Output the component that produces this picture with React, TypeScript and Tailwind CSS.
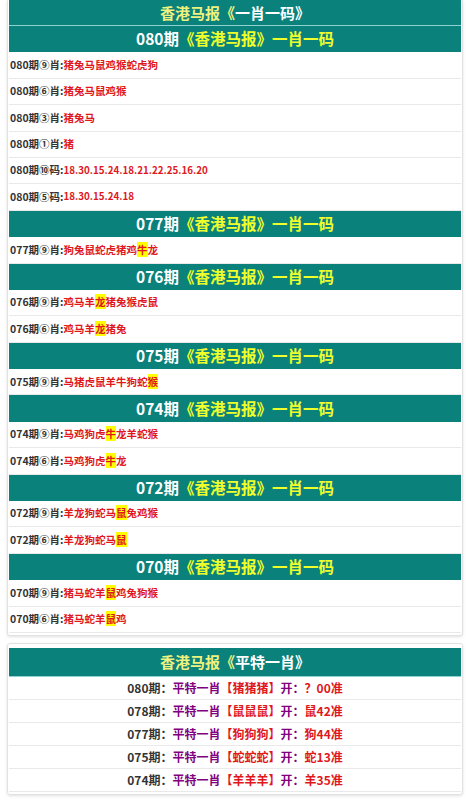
import React from "react";

type Row = { label: string; items: string; hl?: string; code?: boolean };
type Group = { issue: string; rows: Row[] };

const groups: Group[] = [
  {
    issue: "080",
    rows: [
      { label: "080期⑨肖:", items: "猪兔马鼠鸡猴蛇虎狗" },
      { label: "080期⑥肖:", items: "猪兔马鼠鸡猴" },
      { label: "080期③肖:", items: "猪兔马" },
      { label: "080期①肖:", items: "猪" },
      { label: "080期⑩码:", items: "18.30.15.24.18.21.22.25.16.20", code: true },
      { label: "080期⑤码:", items: "18.30.15.24.18", code: true },
    ],
  },
  { issue: "077", rows: [{ label: "077期⑨肖:", items: "狗兔鼠蛇虎猪鸡牛龙", hl: "牛" }] },
  {
    issue: "076",
    rows: [
      { label: "076期⑨肖:", items: "鸡马羊龙猪兔猴虎鼠", hl: "龙" },
      { label: "076期⑥肖:", items: "鸡马羊龙猪兔", hl: "龙" },
    ],
  },
  { issue: "075", rows: [{ label: "075期⑨肖:", items: "马猪虎鼠羊牛狗蛇猴", hl: "猴" }] },
  {
    issue: "074",
    rows: [
      { label: "074期⑨肖:", items: "马鸡狗虎牛龙羊蛇猴", hl: "牛" },
      { label: "074期⑥肖:", items: "马鸡狗虎牛龙", hl: "牛" },
    ],
  },
  {
    issue: "072",
    rows: [
      { label: "072期⑨肖:", items: "羊龙狗蛇马鼠兔鸡猴", hl: "鼠" },
      { label: "072期⑥肖:", items: "羊龙狗蛇马鼠", hl: "鼠" },
    ],
  },
  {
    issue: "070",
    rows: [
      { label: "070期⑨肖:", items: "猪马蛇羊鼠鸡兔狗猴", hl: "鼠" },
      { label: "070期⑥肖:", items: "猪马蛇羊鼠鸡", hl: "鼠" },
    ],
  },
];

const pt = [
  { issue: "080", z: "猪猪猪", open: "？00准" },
  { issue: "078", z: "鼠鼠鼠", open: "鼠42准" },
  { issue: "077", z: "狗狗狗", open: "狗44准" },
  { issue: "075", z: "蛇蛇蛇", open: "蛇13准" },
  { issue: "074", z: "羊羊羊", open: "羊35准" },
];

const font = { fontFamily: '"Noto Sans CJK SC", "Noto Sans", sans-serif' };

function Items({ items, hl, code }: { items: string; hl?: string; code?: boolean }) {
  const chars = Array.from(items);
  return (
    <span className={code ? "text-[#e0181c] text-[9.8px]" : "text-[#e0181c]"}>
      {chars.map((c, i) =>
        hl && c === hl ? (
          <span key={i} className="bg-[#ffff00]">
            {c}
          </span>
        ) : (
          <span key={i}>{c}</span>
        )
      )}
    </span>
  );
}

export default function App() {
  return (
    <div className="bg-white w-[466px] min-h-[800px] font-bold" style={font}>
      <div className="ml-[7px] mr-[3px] border border-t-0 border-[#e2e2e2] px-[1px] pb-[2px] shadow-[0_1px_3px_rgba(0,0,0,0.12)] rounded-b-[3px]">
        <div className="h-[25px] bg-[#0a817b] flex items-center justify-center text-[15px] leading-none">
          <span className="text-[#eef27e]">香港马报《</span>
          <span className="text-white">一肖一码》</span>
        </div>
        <div className="h-[1px] bg-[#8fd3d0]" />
        {groups.map((g) => (
          <div key={g.issue}>
            <div className="h-[26.4px] bg-[#0a817b] flex items-center justify-center text-[15.5px] leading-none">
              <span className="text-white">{g.issue}期</span>
              <span className="text-[#eeff2c]">《香港马报》一肖一码</span>
            </div>
            {g.rows.map((r, i) => (
              <div
                key={i}
                className="h-[26.4px] flex items-center border-b border-[#e9e9e9] text-[10.5px] leading-none pl-[1px]"
              >
                <span className="text-[#333333]">{r.label}</span>
                <Items items={r.items} hl={r.hl} code={r.code} />
              </div>
            ))}
          </div>
        ))}
      </div>

      <div className="mt-[7px] ml-[7px] mr-[3px] border border-[#e2e2e2] px-[1px] pt-[4px] pb-[2px] rounded-[3px] shadow-[0_1px_3px_rgba(0,0,0,0.12)]">
        <div className="h-[29px] bg-[#0a817b] flex items-center justify-center text-[15px] leading-none border-b border-[#8fd3d0]">
          <span className="text-[#eef27e]">香港马报《</span>
          <span className="text-white">平特一肖》</span>
        </div>
        {pt.map((p) => (
          <div
            key={p.issue}
            className="h-[23px] flex items-center justify-center border-b border-[#e9e9e9] text-[12px] leading-none"
          >
            <span className="text-[#333333]">{p.issue}期：</span>
            <span className="text-[#800080]">平特一肖</span>
            <span className="text-[#e0181c]">【{p.z}】</span>
            <span className="text-[#800080]">开：</span>
            <span className="text-[#e0181c]">{p.open}</span>
          </div>
        ))}
      </div>
    </div>
  );
}
